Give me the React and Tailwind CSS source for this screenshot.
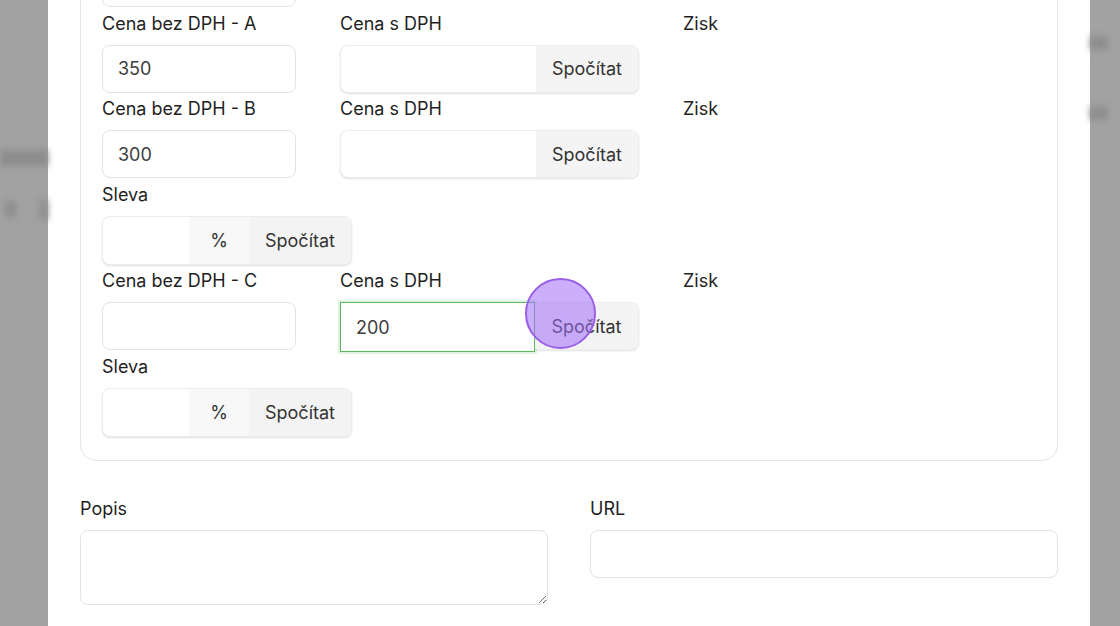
import React from 'react';

const font = { fontFamily: 'Inter, "Noto Sans", sans-serif' };

function Label({ children }) {
  return <div className="text-[18px] leading-[24px] text-[#1f1f1f] mb-[9px]">{children}</div>;
}

function TextInput({ value, className = '' }) {
  return (
    <div className={`h-[48px] rounded-[8px] border border-[#e3e3e3] bg-white pl-[15px] flex items-center text-[18px] text-[#3d3d3d] ${className}`}>
      {value}
    </div>
  );
}

function CalcGroup({ value, focused }) {
  return (
    <div className="h-[48px] w-[299px] flex rounded-[8px] border border-[#ececec] shadow-[0_1px_2px_rgba(0,0,0,0.12)] bg-white">
      {focused ? (
        <div className="w-[195px] -my-px -ml-px h-[50px] border border-[#5cb85c] shadow-[0_0_0_2px_rgba(92,184,92,0.18)] pl-[15px] flex items-center text-[18px] text-[#3d3d3d] bg-white">
          {value}
        </div>
      ) : (
        <div className="w-[195px] rounded-l-[8px]" />
      )}
      <div className="flex-1 bg-[#f4f4f4] rounded-r-[8px] flex items-center justify-center text-[18px] text-[#333]">
        Spočítat
      </div>
    </div>
  );
}

function SlevaGroup() {
  return (
    <div className="h-[49px] w-[250px] flex rounded-[8px] border border-[#ececec] shadow-[0_1px_2px_rgba(0,0,0,0.12)] bg-white">
      <div className="w-[86px]" />
      <div className="w-[60px] bg-[#f8f8f8] flex items-center justify-center text-[18px] text-[#333]">%</div>
      <div className="flex-1 bg-[#f3f3f3] rounded-r-[8px] flex items-center justify-center text-[18px] text-[#333]">
        Spočítat
      </div>
    </div>
  );
}

function PriceRow({ label, value, withSleva, focused, focusValue }) {
  return (
    <>
      <div className="flex gap-[44px] mb-[4.5px]">
        <div className="w-[194px]">
          <Label>{label}</Label>
          <TextInput value={value} />
        </div>
        <div className="w-[299px] relative">
          <Label>Cena s DPH</Label>
          <CalcGroup value={focusValue} focused={focused} />
          {focused && (
            <div className="absolute left-[185px] top-[9px] w-[71px] h-[71px] rounded-full border-[2.5px] border-[#9a5ee6] bg-[rgba(160,110,250,0.55)]" />
          )}
        </div>
        <div>
          <Label>Zisk</Label>
        </div>
      </div>
      {withSleva && (
        <div className="mb-[4.5px]">
          <Label>Sleva</Label>
          <SlevaGroup />
        </div>
      )}
    </>
  );
}

export default function App() {
  return (
    <div className="w-[1120px] h-[626px] overflow-hidden flex bg-[#a2a2a2]" style={font}>
      <div className="w-[48px] flex flex-col">
        <div className="h-[150px]" />
        <div className="h-[16px] bg-[#8d8d8d] blur-[3px]" />
        <div className="h-[34px]" />
        <div className="flex gap-[22px] pl-[4px]">
          <div className="w-[14px] h-[18px] rounded-full bg-[#8f8f8f] blur-[3px]" />
          <div className="w-[10px] h-[20px] bg-[#909090] blur-[3px]" />
        </div>
      </div>

      <div className="w-[1042px] bg-white px-[32px]">
        <div className="-mt-[96px] rounded-[16px] border border-[#e6e6e6] px-[21px] pt-[21px] pb-[19px]">
          <div className="mb-[4.5px]">
            <div className="h-[33px]" />
            <TextInput value="" className="w-[194px]" />
          </div>
          <PriceRow label="Cena bez DPH - A" value="350" />
          <PriceRow label="Cena bez DPH - B" value="300" withSleva />
          <PriceRow label="Cena bez DPH - C" value="" withSleva focused focusValue="200" />
        </div>

        <div className="mt-[36px] flex gap-[42px]">
          <div className="w-[468px]">
            <Label>Popis</Label>
            <textarea
              readOnly
              className="block w-full h-[75px] rounded-[8px] border border-[#e3e3e3] bg-white outline-none"
            />
          </div>
          <div className="w-[468px]">
            <Label>URL</Label>
            <TextInput value="" />
          </div>
        </div>
      </div>

      <div className="flex-1 flex flex-col pt-[36px] gap-[56px]">
        <div className="w-[18px] h-[14px] bg-[#8e8e8e] blur-[3px]" />
        <div className="w-[18px] h-[14px] bg-[#8e8e8e] blur-[3px]" />
      </div>
    </div>
  );
}
